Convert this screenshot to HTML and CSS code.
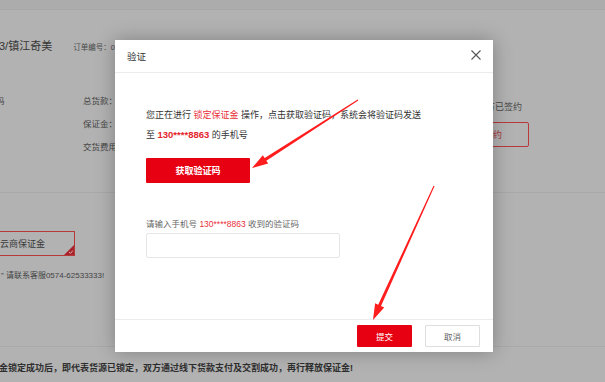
FILE: index.html
```html
<!DOCTYPE html>
<html lang="zh-CN">
<head>
    <meta charset="UTF-8">
    <meta name="viewport" content="width=device-width, initial-scale=1.0">
    <title>验证</title>
    <link rel="stylesheet" href="styles.css">
</head>
<body>
    <div id="page">
        <div class="topbar"></div>

        <div class="order-head">
            <span class="order-title">3/镇江奇美</span>
            <span class="order-no">订单编号：0</span>
        </div>

        <div class="info">
            <div class="info-left">
                <div class="row cut">码</div>
            </div>
            <div class="info-mid">
                <div class="row">总货款：</div>
                <div class="row">保证金：</div>
                <div class="row">交货费用</div>
            </div>
            <div class="info-right">
                <div class="signed">双方已签约</div>
                <button class="outline-btn">解除签约</button>
            </div>
        </div>

        <div class="deposit">
            <div class="deposit-box">
                <span>鄞云商保证金</span>
                <span class="corner">
                    <svg width="10" height="10" viewBox="0 0 10 10">
                        <path d="M0 10 L10 0 L10 10 Z" fill="#a8232a"/>
                        <path d="M5 7 L6.5 8.4 L8.8 5.6" fill="none" stroke="#e8c8c8" stroke-width="0.8"/>
                    </svg>
                </span>
            </div>
            <div class="contact">” 请联系客服0574-62533333!</div>
        </div>

        <div class="notice">金锁定成功后，即代表货源已锁定，双方通过线下货款支付及交割成功，再行释放保证金!</div>
    </div>

    <div id="modal">
        <div class="modal-header">
            <span class="modal-title">验证</span>
            <span class="modal-close">
                <svg width="10" height="10" viewBox="0 0 10 10">
                    <path d="M0.5 0.5 L9.5 9.5 M9.5 0.5 L0.5 9.5" stroke="#555" stroke-width="1.1"/>
                </svg>
            </span>
        </div>
        <div class="modal-body">
            <p class="tip">您正在进行 <span class="hl">锁定保证金</span> 操作，点击获取验证码，系统会将验证码发送<br>至 <b class="phone">130****8863</b> 的手机号</p>
            <button class="get-code">获取验证码</button>
            <div class="code-label">请输入手机号 <span class="hl">130****8863</span> 收到的验证码</div>
            <input class="code-input" type="text">
        </div>
        <div class="modal-footer">
            <button class="btn-submit">提交</button>
            <button class="btn-cancel">取消</button>
        </div>
    </div>

    <svg id="arrows" width="605" height="382" viewBox="0 0 605 382">
        <polygon points="252,168 268.2,163.6 266.3,160.7 358.3,100.4 357.7,99.6 264.7,158.1 262.8,155.2" />
        <polygon points="373,320 384.2,307.5 381,306 434.5,186.2 433.5,185.8 378.2,304.8 375.1,303.3" />
    </svg>
</body>
</html>
```

FILE: styles.css
```css
body {
    margin: 0;
    width: 605px;
    height: 382px;
    overflow: hidden;
    background-color: #b2b2b2;
    font-family: "Liberation Sans", "Noto Sans CJK SC", sans-serif;
    color: #3a3a3a;
    position: relative;
}
#page {
    width: 605px;
    height: 382px;
    overflow: hidden;
}
.topbar {
    height: 9px;
    background-color: #acacac;
    border-bottom: 1px solid #a7a7a7;
}
.order-head {
    display: flex;
    align-items: center;
    height: 16px;
    margin-top: 28px;
    margin-left: -1px;
}
.order-title {
    font-size: 11px;
    line-height: 16px;
    color: #363636;
}
.order-no {
    font-size: 7.5px;
    color: #4a4a4a;
    margin-left: 21px;
}
.info {
    display: flex;
    margin-top: 36px;
    height: 102px;
    border-bottom: 1px solid #a9a9a9;
}
.row {
    height: 23px;
    line-height: 23px;
    font-size: 8.5px;
    color: #444;
}
.info-left {
    width: 83px;
}
.cut {
    margin-left: -4px;
}
.info-right {
    margin-left: auto;
    margin-right: 76px;
    display: flex;
    flex-direction: column;
    align-items: flex-end;
    padding-top: 9px;
}
.signed {
    font-size: 9px;
    line-height: 16px;
    color: #484848;
    margin-right: 7px;
}
.outline-btn {
    margin-top: 7px;
    width: 90px;
    height: 25px;
    border: 1px solid #b8393b;
    border-radius: 2px;
    background: none;
    color: #a8353a;
    font-family: inherit;
    font-size: 9px;
    padding: 0;
}
.deposit {
    height: 154px;
    border-bottom: 1px solid #a9a9a9;
    padding-top: 38px;
    box-sizing: border-box;
}
.deposit-box {
    position: relative;
    width: 92px;
    height: 25px;
    margin-left: -17px;
    border: 1px solid #b5383a;
    box-sizing: border-box;
    display: flex;
    align-items: center;
    padding-left: 7px;
    font-size: 9px;
    color: #3a3a3a;
}
.corner {
    position: absolute;
    right: 0;
    bottom: 0;
    width: 10px;
    height: 10px;
}
.corner svg {
    display: block;
}
.contact {
    margin-top: 13px;
    margin-left: 1px;
    font-size: 8px;
    line-height: 14px;
    color: #444;
}
.notice {
    margin-top: 14px;
    margin-left: -1px;
    font-size: 9px;
    line-height: 14px;
    font-weight: bold;
    color: #2e2e2e;
    white-space: nowrap;
}
#modal {
    position: absolute;
    left: 115px;
    top: 40px;
    width: 378px;
    height: 312px;
    background-color: #fff;
    box-shadow: 0 0 18px rgba(0, 0, 0, 0.28);
    display: flex;
    flex-direction: column;
}
.modal-header {
    height: 32px;
    border-bottom: 1px solid #ececec;
    display: flex;
    align-items: center;
    justify-content: space-between;
    padding: 0 12px 0 12px;
    flex-shrink: 0;
}
.modal-title {
    font-size: 9.5px;
    color: #333;
}
.modal-close {
    display: flex;
    margin-top: -3px;
}
.modal-body {
    flex: 1;
    padding: 32px 0 0 31px;
}
.tip {
    margin: 0;
    font-size: 9px;
    line-height: 20px;
    color: #333;
    white-space: nowrap;
}
.hl {
    color: #e8303a;
}
.phone {
    color: #e3242b;
    font-size: 9.5px;
}
.get-code {
    display: block;
    margin-top: 13px;
    width: 104px;
    height: 25px;
    border: none;
    border-radius: 1px;
    background-color: #e60012;
    color: #fff;
    font-family: inherit;
    font-size: 9px;
    font-weight: bold;
    padding: 0;
}
.code-label {
    margin-top: 34px;
    font-size: 8.5px;
    line-height: 14px;
    color: #666;
}
.code-input {
    display: block;
    margin-top: 2px;
    width: 194px;
    height: 25px;
    box-sizing: border-box;
    border: 1px solid #e6e6e6;
    border-radius: 2px;
    outline: none;
}
.modal-footer {
    height: 33px;
    box-sizing: border-box;
    border-top: 1px solid #ececec;
    display: flex;
    justify-content: flex-end;
    align-items: flex-start;
    gap: 13px;
    padding: 5px 13px 0 0;
    flex-shrink: 0;
}
.modal-footer button {
    width: 55px;
    height: 22px;
    padding: 0;
    font-family: inherit;
    font-size: 8.5px;
    border-radius: 1px;
}
.btn-submit {
    background-color: #e60012;
    color: #fff;
    border: none;
}
.btn-cancel {
    background-color: #fff;
    color: #666;
    border: 1px solid #dedede;
}
#arrows {
    position: absolute;
    left: 0;
    top: 0;
    pointer-events: none;
}
#arrows polygon {
    fill: #ff1d1d;
}
```
